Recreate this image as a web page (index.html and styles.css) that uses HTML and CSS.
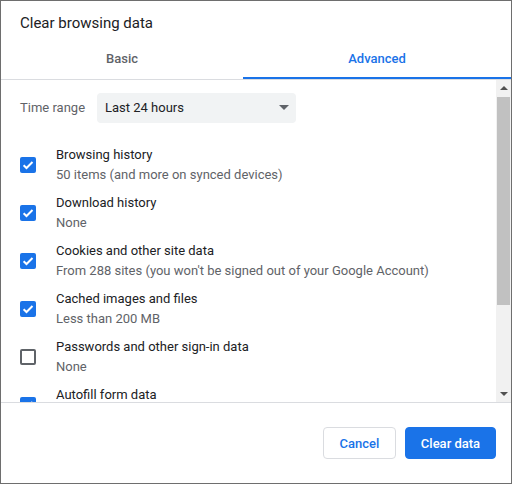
FILE: index.html
```html
<!DOCTYPE html>
<html>
<head>
<meta charset="utf-8">
<link rel="stylesheet" href="styles.css">
</head>
<body>
<div class="dialog">
  <div class="title">Clear browsing data</div>
  <div class="tabs">
    <div class="tab tab-basic">Basic</div>
    <div class="tab tab-active">Advanced</div>
  </div>
  <div class="body">
    <div class="content">
      <div class="range-row">
        <span class="range-label">Time range</span>
        <div class="select">
          <span>Last 24 hours</span>
          <span class="caret"></span>
        </div>
      </div>
      <div class="item">
        <span class="cb checked"><svg viewBox="0 0 16 16" width="16" height="16"><path d="M3.6 8.2l2.9 2.8 6-6" fill="none" stroke="#fff" stroke-width="2"/></svg></span>
        <div class="texts"><div class="primary">Browsing history</div><div class="secondary">50 items (and more on synced devices)</div></div>
      </div>
      <div class="item">
        <span class="cb checked"><svg viewBox="0 0 16 16" width="16" height="16"><path d="M3.6 8.2l2.9 2.8 6-6" fill="none" stroke="#fff" stroke-width="2"/></svg></span>
        <div class="texts"><div class="primary">Download history</div><div class="secondary">None</div></div>
      </div>
      <div class="item">
        <span class="cb checked"><svg viewBox="0 0 16 16" width="16" height="16"><path d="M3.6 8.2l2.9 2.8 6-6" fill="none" stroke="#fff" stroke-width="2"/></svg></span>
        <div class="texts"><div class="primary">Cookies and other site data</div><div class="secondary">From 288 sites (you won't be signed out of your Google Account)</div></div>
      </div>
      <div class="item">
        <span class="cb checked"><svg viewBox="0 0 16 16" width="16" height="16"><path d="M3.6 8.2l2.9 2.8 6-6" fill="none" stroke="#fff" stroke-width="2"/></svg></span>
        <div class="texts"><div class="primary">Cached images and files</div><div class="secondary">Less than 200 MB</div></div>
      </div>
      <div class="item">
        <span class="cb"></span>
        <div class="texts"><div class="primary">Passwords and other sign-in data</div><div class="secondary">None</div></div>
      </div>
      <div class="item">
        <span class="cb checked"><svg viewBox="0 0 16 16" width="16" height="16"><path d="M3.6 8.2l2.9 2.8 6-6" fill="none" stroke="#fff" stroke-width="2"/></svg></span>
        <div class="texts"><div class="primary">Autofill form data</div><div class="secondary">None</div></div>
      </div>
    </div>
    <div class="scrollbar">
      <div class="sb-arrow"><span class="tri-up"></span></div>
      <div class="sb-track"><div class="sb-thumb"></div></div>
      <div class="sb-arrow"><span class="tri-down"></span></div>
    </div>
  </div>
  <div class="footer">
    <button class="btn btn-cancel">Cancel</button>
    <button class="btn btn-primary">Clear data</button>
  </div>
</div>
</body>
</html>
```

FILE: styles.css
```css
* { box-sizing: border-box; }
html, body { margin: 0; padding: 0; background: #fff; }
body {
  font-family: Roboto, "Liberation Sans", sans-serif;
  font-size: 13px;
  color: #202124;
}
.dialog {
  width: 512px;
  height: 484px;
  border: 1px solid #6e6e6e;
  display: flex;
  flex-direction: column;
  background: #fff;
}
.title {
  height: 37px;
  padding: 12px 19px 0;
  font-size: 15px;
  line-height: 20px;
  color: #202124;
}
.tabs {
  display: flex;
  height: 42px;
  border-bottom: 1px solid #dadce0;
}
.tab {
  height: 41px;
  display: flex;
  align-items: center;
  justify-content: center;
  font-weight: 500;
  font-size: 13px;
  color: #5f6368;
}
.tab-basic { width: 242px; }
.tab-active {
  flex: 1;
  color: #1a73e8;
  border-bottom: 2px solid #1a73e8;
  padding-top: 2px;
}
.body {
  height: 322px;
  display: flex;
  overflow: hidden;
}
.content {
  flex: 1;
  overflow: hidden;
  padding: 13px 0 0 19px;
}
.range-row {
  display: flex;
  align-items: center;
  height: 30px;
  margin-bottom: 18px;
}
.range-label {
  width: 77px;
  color: #5f6368;
  padding-bottom: 1px;
}
.select {
  width: 199px;
  height: 30px;
  background: #f1f3f4;
  border-radius: 4px;
  display: flex;
  align-items: center;
  justify-content: space-between;
  padding: 0 7px 1px 8px;
  color: #202124;
}
.caret {
  width: 0;
  height: 0;
  border-left: 5px solid transparent;
  border-right: 5px solid transparent;
  border-top: 5px solid #5f6368;
}
.item {
  display: flex;
  align-items: center;
  height: 48px;
}
.cb {
  width: 16px;
  height: 16px;
  border: 2px solid #5f6368;
  border-radius: 2px;
  margin-right: 20px;
  flex: none;
  display: flex;
}
.cb.checked {
  border: none;
  background: #1a73e8;
}
.texts { line-height: 20px; white-space: nowrap; }
.primary { color: #202124; }
.secondary { color: #5f6368; }
.scrollbar {
  width: 15px;
  background: #f1f1f1;
  display: flex;
  flex-direction: column;
}
.sb-arrow {
  height: 16px;
  display: flex;
  align-items: center;
  justify-content: center;
}
.sb-track {
  flex: 1;
  padding: 1px 1px 0 1px;
}
.sb-thumb {
  height: 208px;
  background: #c1c1c1;
}
.tri-up {
  width: 0; height: 0;
  border-left: 4px solid transparent;
  border-right: 4px solid transparent;
  border-bottom: 4px solid #505050;
}
.tri-down {
  width: 0; height: 0;
  border-left: 4px solid transparent;
  border-right: 4px solid transparent;
  border-top: 4px solid #505050;
}
.footer {
  flex: 1;
  border-top: 1px solid #dadce0;
  display: flex;
  justify-content: flex-end;
  align-items: flex-start;
  padding: 24px 15px 0 0;
  gap: 9px;
}
.btn {
  height: 32px;
  border-radius: 4px;
  font-family: Roboto, "Liberation Sans", sans-serif;
  font-size: 13px;
  font-weight: 500;
  padding: 0;
  cursor: pointer;
}
.btn-cancel {
  width: 73px;
  background: #fff;
  color: #1a73e8;
  border: 1px solid #dadce0;
}
.btn-primary {
  width: 91px;
  background: #1a73e8;
  color: #fff;
  border: 1px solid #1a73e8;
}
```
